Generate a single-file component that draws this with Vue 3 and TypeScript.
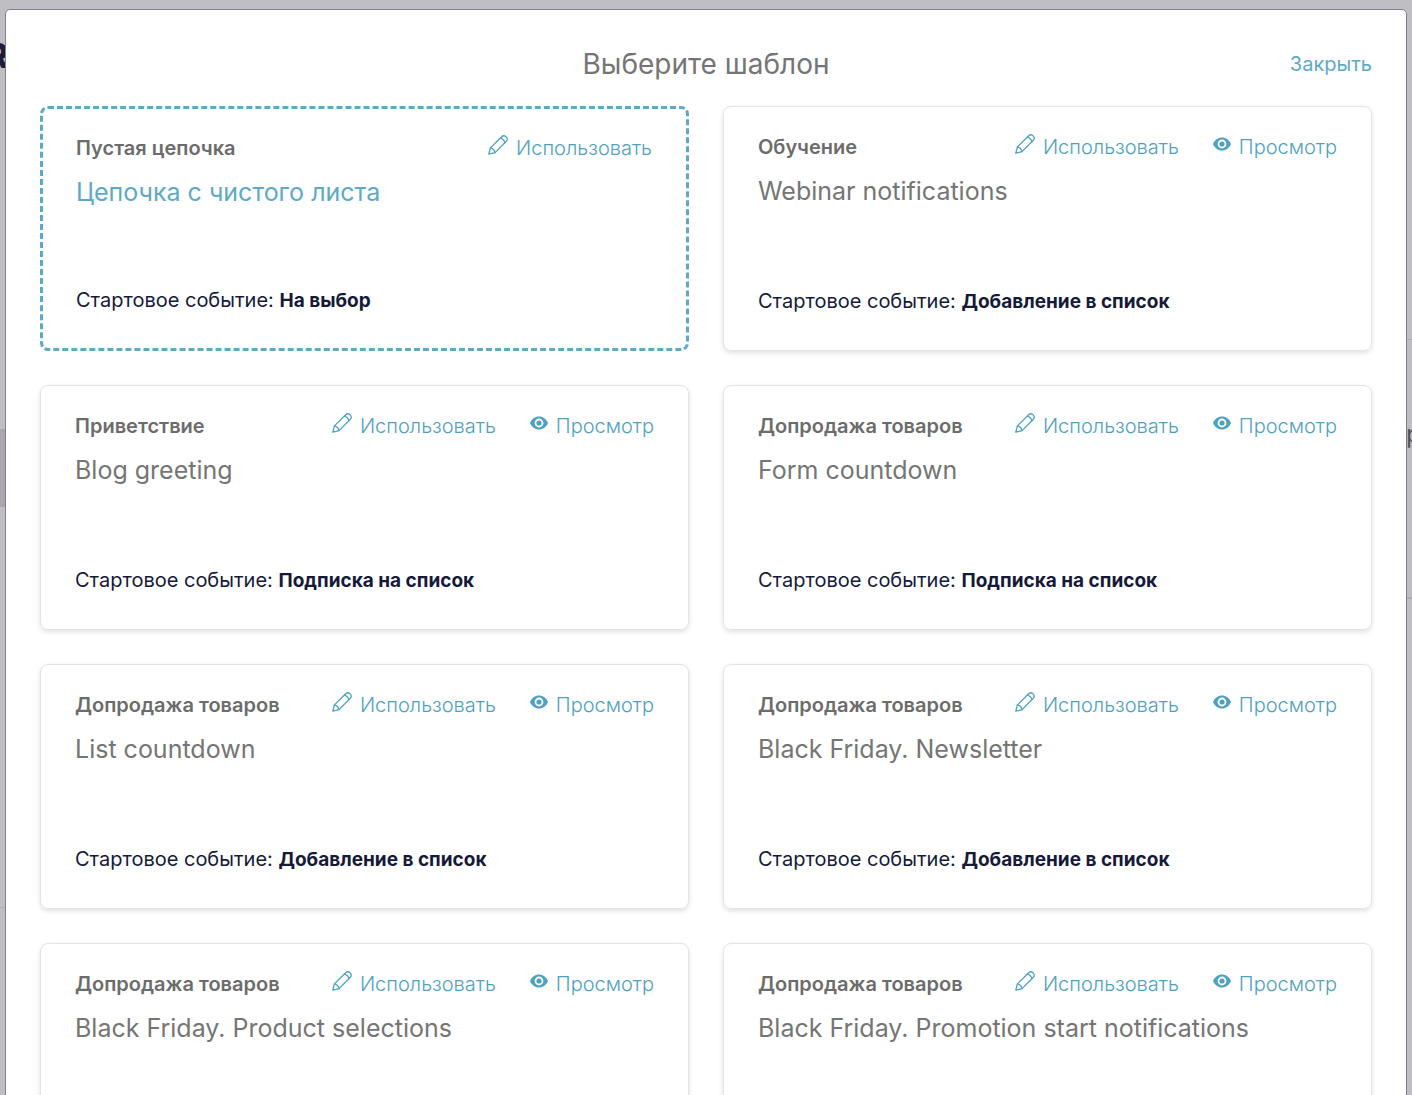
<script setup lang="ts">
interface Template {
  category: string
  title: string
  event: string
  blank?: boolean
}

const templates: Template[] = [
  { category: 'Пустая цепочка', title: 'Цепочка с чистого листа', event: 'На выбор', blank: true },
  { category: 'Обучение', title: 'Webinar notifications', event: 'Добавление в список' },
  { category: 'Приветствие', title: 'Blog greeting', event: 'Подписка на список' },
  { category: 'Допродажа товаров', title: 'Form countdown', event: 'Подписка на список' },
  { category: 'Допродажа товаров', title: 'List countdown', event: 'Добавление в список' },
  { category: 'Допродажа товаров', title: 'Black Friday. Newsletter', event: 'Добавление в список' },
  { category: 'Допродажа товаров', title: 'Black Friday. Product selections', event: 'Добавление в список' },
  { category: 'Допродажа товаров', title: 'Black Friday. Promotion start notifications', event: 'Добавление в список' },
]
</script>

<template>
  <div class="page">
    <div class="behind" aria-hidden="true">
      <span class="behind-logo">R</span>
      <span class="behind-mark"></span>
      <span class="behind-line"></span>
      <span class="behind-panel"></span>
      <span class="behind-text">р</span>
    </div>
    <main class="dialog" role="dialog" aria-labelledby="dialog-title">
      <header class="head">
        <h1 id="dialog-title">Выберите шаблон</h1>
        <button type="button" class="close">Закрыть</button>
      </header>
      <section class="grid">
        <article v-for="t in templates" :key="t.title" class="card" :class="{ blank: t.blank }">
          <div class="top">
            <span class="category">{{ t.category }}</span>
            <div class="actions">
              <button type="button" class="action">
                <svg class="pencil" viewBox="0 0 20 20" width="20" height="20" fill="none" stroke="currentColor" stroke-width="1.3" stroke-linejoin="round" stroke-linecap="round">
                  <path d="M.8 19.200 2.400 12.900 13.700 1.700Q15.900-.2 18.100 1.900 20.300 4.100 18.300 6.300L7.100 17.600Z" />
                  <path d="M12.300 3.100Q16 3.900 16.900 7.700M2.400 12.900Q6.200 13.700 7.100 17.600" />
                </svg>
                Использовать
              </button>
              <button v-if="!t.blank" type="button" class="action">
                <svg class="eye" viewBox="0 0 18 14" width="18" height="14">
                  <path fill="currentColor" fill-rule="evenodd" d="M9 .5C13 .5 16.300 3.100 18 7c-1.700 3.900-5 6.500-9 6.500S1.700 10.900 0 7C1.700 3.100 5 .5 9 .5ZM9 2.600a4.400 4.400 0 1 0 0 8.800 4.400 4.400 0 0 0 0-8.800ZM9 4.400a2.600 2.600 0 1 1 0 5.200 2.600 2.600 0 0 1 0-5.200Z" />
                </svg>
                Просмотр
              </button>
            </div>
          </div>
          <h2>{{ t.title }}</h2>
          <p class="event">Стартовое событие: <strong>{{ t.event }}</strong></p>
        </article>
      </section>
    </main>
  </div>
</template>

<style>
body {
  margin: 0;
}
</style>

<style scoped>
.page {
  position: relative;
  box-sizing: border-box;
  height: 100vh;
  overflow: hidden;
  padding: 9px 5px 0;
  background: #bfbfc3;
  font-family: Inter, "Liberation Sans", sans-serif;
  font-size: 20px;
  line-height: 24px;
  color: #151a38;
}

.behind {
  position: absolute;
  inset: 0;
}

.behind span {
  position: absolute;
}

.behind .behind-logo {
  top: 36px;
  left: -14px;
  font-size: 34px;
  line-height: 40px;
  font-weight: 800;
  color: #1c1c38;
}

.behind .behind-mark {
  top: 429px;
  left: 0;
  width: 5px;
  height: 78px;
  background: #aea5b2;
}

.behind .behind-line {
  top: 907px;
  left: 0;
  width: 5px;
  height: 1px;
  background: #adadb2;
}

.behind .behind-panel {
  top: 339px;
  right: 0;
  width: 5px;
  height: 257px;
  border-top: 1px solid #adadb2;
  border-bottom: 2px solid #adadb2;
  background: #bdbdc2;
}

.behind .behind-text {
  top: 422px;
  left: calc(100% - 6px);
  font-size: 25px;
  color: #555;
}

.dialog {
  position: relative;
  box-sizing: border-box;
  min-height: 100%;
  padding: 34px;
  border: 1px solid #7f7f92;
  border-radius: 5px;
  background: #fff;
}

.head {
  display: grid;
  grid-template-columns: 1fr auto 1fr;
  align-items: center;
  height: 40px;
  margin-bottom: 22px;
}

h1 {
  grid-column: 2;
  margin: 0;
  font-size: 28px;
  line-height: 36px;
  font-weight: 400;
  color: #757575;
}

button {
  padding: 0;
  border: 0;
  background: none;
  font: inherit;
  color: #5ea9c6;
  cursor: pointer;
}

.close {
  justify-self: end;
}

.grid {
  display: grid;
  grid-template-columns: repeat(2, minmax(0, 1fr));
  gap: 34px;
}

.card {
  display: flex;
  flex-direction: column;
  box-sizing: border-box;
  height: 245px;
  padding: 28px 34px 36px;
  border: 1px solid #e4e4e4;
  border-radius: 8px;
  box-shadow: 0 2px 5px rgba(0, 0, 0, 0.12);
}

.card.blank {
  padding: 27px 34px 35px 33px;
  border: 3px dashed #5ea9c6;
  box-shadow: none;
}

.top {
  display: flex;
  justify-content: space-between;
}

.category {
  font-weight: 600;
  color: #6c6c6c;
}

.actions {
  display: flex;
  gap: 34px;
}

.action {
  display: flex;
  gap: 8px;
  font-weight: 300;
  color: #4fa1c0;
}

.pencil {
  margin-top: -1px;
}

.eye {
  margin-top: 2px;
}

h2 {
  margin: 15px 0 0;
  font-size: 25px;
  line-height: 34px;
  font-weight: 400;
  color: #757575;
}

.blank h2 {
  color: #5ea9c6;
}

.event {
  margin: auto 0 0;
}

strong {
  font-size: 19px;
  font-weight: 700;
}
</style>
